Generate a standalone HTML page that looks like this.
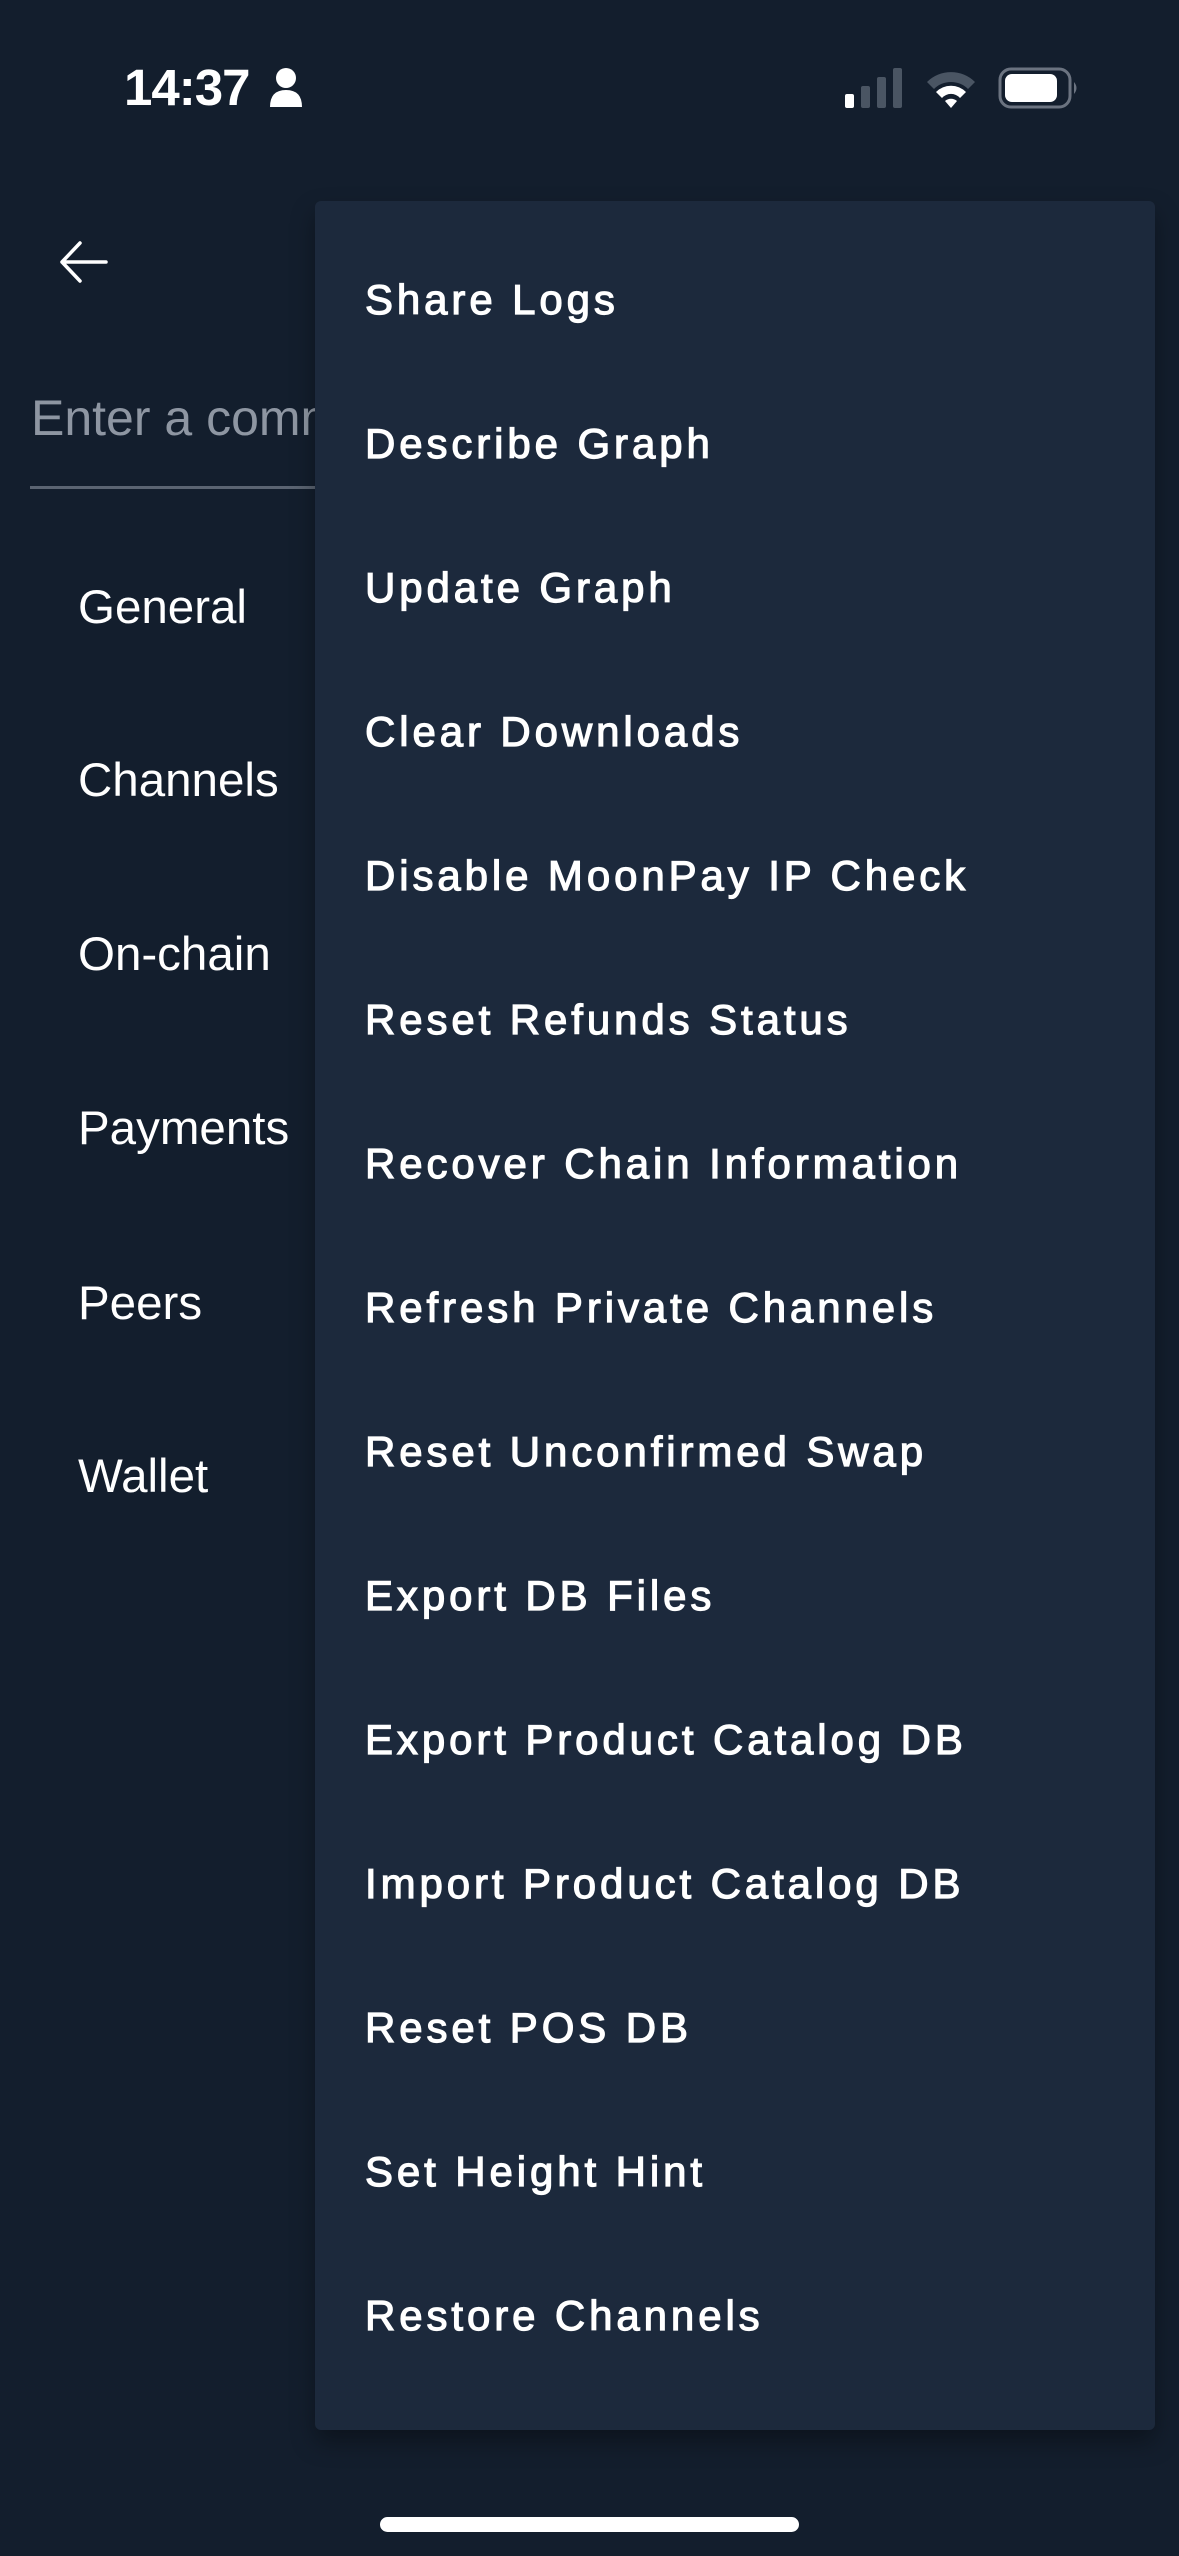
<!DOCTYPE html>
<html><head><meta charset="utf-8"><style>
html,body{margin:0;padding:0;}
body{width:1179px;height:2556px;background:#131e2d;position:relative;overflow:hidden;font-family:"Liberation Sans",sans-serif;color:#fff;}
.abs{position:absolute;}
.time{left:124px;top:58px;font-size:51px;font-weight:700;letter-spacing:-1px;}
.side{left:78px;font-size:47.5px;color:#fff;line-height:1;}
.menu{left:315px;top:201px;width:840px;height:2229px;background:#1c293c;border-radius:6px;box-shadow:0 12px 24px rgba(0,0,0,0.35);}
.mi{position:absolute;left:50px;font-size:42px;letter-spacing:3.9px;-webkit-text-stroke:1.2px #fff;line-height:1;white-space:nowrap;}
</style></head><body>
<div class="abs time">14:37</div>
<svg class="abs" style="left:268px;top:67px" width="36" height="40" viewBox="0 0 36 40"><circle cx="18" cy="11" r="10" fill="#fff"/><path d="M2 40 Q2 23 18 23 Q34 23 34 40 Z" fill="#fff"/></svg>
<svg class="abs" style="left:845px;top:68px" width="60" height="40" viewBox="0 0 60 40"><rect x="0" y="26" width="9" height="14" rx="2" fill="#fff"/><rect x="16" y="18" width="9" height="22" rx="2" fill="#4a5563"/><rect x="32" y="9" width="9" height="31" rx="2" fill="#4a5563"/><rect x="48" y="0" width="9" height="40" rx="2" fill="#4a5563"/></svg>
<svg class="abs" style="left:925px;top:68px" width="52" height="40" viewBox="0 0 52 40"><path d="M2 14 A34 34 0 0 1 50 14 L43 21 A24 24 0 0 0 9 21 Z" fill="#4a5563"/><path d="M11 24 A21 21 0 0 1 41 24 L35 30 A12 12 0 0 0 17 30 Z" fill="#fff"/><path d="M20 33 A9 9 0 0 1 32 33 L26 40 Z" fill="#fff"/></svg>
<svg class="abs" style="left:998px;top:67px" width="82" height="42" viewBox="0 0 82 42"><rect x="2" y="2" width="70" height="38" rx="11" fill="none" stroke="#6b7380" stroke-width="3"/><rect x="7" y="7" width="52" height="28" rx="7" fill="#fff"/><path d="M76 15 Q81 21 76 27 Z" fill="#6b7380"/></svg>
<svg class="abs" style="left:58px;top:240px" width="52" height="44" viewBox="0 0 52 44"><path d="M48 22 H4 M22 3 L4 22 L22 41" fill="none" stroke="#fff" stroke-width="3.5" stroke-linecap="round" stroke-linejoin="round"/></svg>
<div class="abs" style="left:31px;top:389px;font-size:50px;color:#8e96a2;white-space:nowrap;">Enter a command</div>
<div class="abs" style="left:30px;top:486px;width:300px;height:3px;background:#5b6472;"></div>
<div class="abs side" style="top:584px">General</div>
<div class="abs side" style="top:757px">Channels</div>
<div class="abs side" style="top:931px">On-chain</div>
<div class="abs side" style="top:1105px">Payments</div>
<div class="abs side" style="top:1280px">Peers</div>
<div class="abs side" style="top:1453px">Wallet</div>
<div class="abs menu">
<div class="mi" style="top:78px">Share Logs</div>
<div class="mi" style="top:222px">Describe Graph</div>
<div class="mi" style="top:366px">Update Graph</div>
<div class="mi" style="top:510px">Clear Downloads</div>
<div class="mi" style="top:654px">Disable MoonPay IP Check</div>
<div class="mi" style="top:798px">Reset Refunds Status</div>
<div class="mi" style="top:942px">Recover Chain Information</div>
<div class="mi" style="top:1086px">Refresh Private Channels</div>
<div class="mi" style="top:1230px">Reset Unconfirmed Swap</div>
<div class="mi" style="top:1374px">Export DB Files</div>
<div class="mi" style="top:1518px">Export Product Catalog DB</div>
<div class="mi" style="top:1662px">Import Product Catalog DB</div>
<div class="mi" style="top:1806px">Reset POS DB</div>
<div class="mi" style="top:1950px">Set Height Hint</div>
<div class="mi" style="top:2094px">Restore Channels</div>
</div>
<div class="abs" style="left:380px;top:2517px;width:419px;height:15px;border-radius:8px;background:#fff;"></div>
</body></html>
